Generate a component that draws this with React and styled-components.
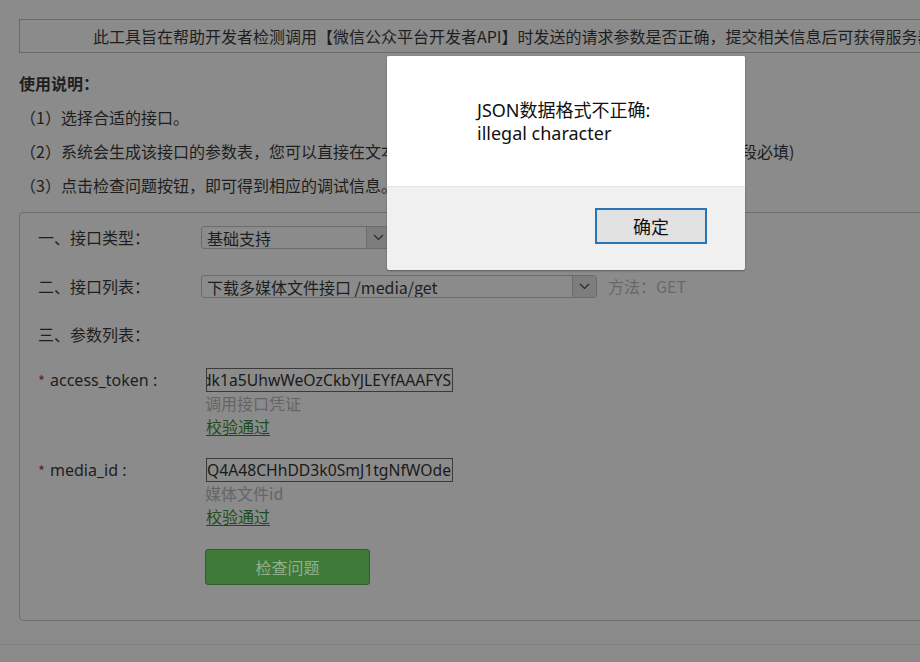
import React from "react";
import styled, { createGlobalStyle } from "styled-components";

const Global = createGlobalStyle`
  html, body { margin: 0; padding: 0; background: #8b8b8b; overflow: hidden; }
  body { font-family: "Noto Sans", "Noto Sans CJK SC", sans-serif; color: #1e1e1e; }
  #root { width: 920px; height: 662px; overflow: hidden; }
`;

const Page = styled.div`
  width: 1160px;
  height: 662px;
  padding: 19px 0 0 19px;
  box-sizing: border-box;
  position: relative;
`;

const Banner = styled.div`
  height: 34px;
  box-sizing: border-box;
  border: 1px solid #6a6a6a;
  display: flex;
  align-items: center;
  padding-left: 73px;
  font-size: 16px;
  white-space: nowrap;
  color: #1e1e1e;
  font-family: "Noto Sans CJK SC", sans-serif;
`;

const Intro = styled.div`
  margin-top: 13px;
  font-size: 16px;
  line-height: 34px;
  font-family: "Noto Sans CJK SC", sans-serif;
`;

const IntroTitle = styled.div`
  font-weight: bold;
`;

const IntroLine = styled.div`
  padding-left: 1px;
  white-space: nowrap;
`;

const Fieldset = styled.div`
  margin-top: 10px;
  border: 1px solid #6e6e6e;
  border-radius: 4px;
  padding: 13px 0 35px 18px;
  box-sizing: border-box;
  font-family: "Noto Sans CJK SC", sans-serif;
  font-size: 16px;
`;

const Row = styled.div`
  display: flex;
  align-items: ${(p) => (p.$top ? "flex-start" : "center")};
  min-height: 23px;
  margin-top: ${(p) => p.$gap || 0}px;
`;

const Label = styled.div`
  width: 163px;
  flex: none;
  line-height: 23px;
  white-space: nowrap;
  display: flex;
  align-items: center;
  height: ${(p) => (p.$h ? p.$h + "px" : "auto")};
`;

const ParamName = styled.span`
  font-family: "Noto Sans", "Noto Sans CJK SC", sans-serif;
  color: #1e1e1e;
`;

const Star = styled.span`
  color: #6e1a1a;
  margin-right: 5px;
  font-size: 15px;
`;

const Select = styled.div`
  width: ${(p) => p.$w}px;
  height: 23px;
  box-sizing: border-box;
  border: 1px solid #6c6c6c;
  border-radius: 3px;
  display: flex;
  align-items: stretch;
  font-size: 16px;
  line-height: 22px;
`;

const SelectText = styled.div`
  flex: 1;
  padding-left: 5px;
  white-space: nowrap;
  overflow: hidden;
  font-family: "Noto Sans CJK SC", sans-serif;
`;

const SelectArrow = styled.div`
  width: 23px;
  flex: none;
  background: #7d7d7d;
  border-left: 1px solid #6c6c6c;
  border-radius: 0 2px 2px 0;
  display: flex;
  align-items: center;
  justify-content: center;
`;

const Method = styled.span`
  margin-left: 11px;
  color: #686868;
  font-size: 16px;
  line-height: 23px;
`;

const ValueCol = styled.div`
  display: flex;
  flex-direction: column;
  margin-left: 5px;
`;

const Input = styled.div`
  width: 247px;
  height: 24px;
  box-sizing: border-box;
  border: 1px solid #3a3a3a;
  display: flex;
  justify-content: flex-end;
  align-items: center;
  overflow: hidden;
  white-space: nowrap;
  font-family: "Noto Sans", sans-serif;
  font-size: 15.7px;
  padding-right: 1px;
  color: #1a1a1a;
`;

const Hint = styled.div`
  line-height: 23px;
  color: #656565;
  margin-left: -1px;
`;

const Verify = styled.a`
  line-height: 23px;
  color: #1d4d1d;
  text-decoration: underline;
  text-underline-offset: 2px;
  align-self: flex-start;
`;

const CheckButton = styled.div`
  margin-left: 167px;
  width: 165px;
  height: 36px;
  box-sizing: border-box;
  background: #3f7a39;
  border: 1px solid #2f5e2b;
  border-radius: 3px;
  color: #93b08b;
  font-size: 16px;
  display: flex;
  align-items: center;
  justify-content: center;
`;

const BottomLine = styled.div`
  margin-top: 23px;
  margin-left: -19px;
  border-top: 1px solid #808080;
`;

const Dialog = styled.div`
  position: absolute;
  left: 387px;
  top: 56px;
  width: 358px;
  height: 214px;
  background: #f0f0f0;
  border-radius: 2px;
  box-shadow: 0 1px 2px rgba(0, 0, 0, 0.35);
  display: flex;
  flex-direction: column;
  overflow: hidden;
`;

const DialogBody = styled.div`
  height: 131px;
  background: #ffffff;
  border-bottom: 1px solid #e4e4e4;
  box-sizing: border-box;
  padding: 43px 0 0 90px;
  font-family: "Noto Sans", "Noto Sans CJK SC", sans-serif;
  font-size: 18px;
  line-height: 23px;
  color: #111;
`;

const DialogFooter = styled.div`
  flex: 1;
  display: flex;
  justify-content: flex-end;
  padding: 21px 38px 0 0;
  box-sizing: border-box;
  align-items: flex-start;
`;

const OkButton = styled.div`
  width: 112px;
  height: 36px;
  box-sizing: border-box;
  border: 2px solid #2a74b4;
  background: #e1e1e1;
  display: flex;
  align-items: center;
  justify-content: center;
  font-family: "Noto Sans CJK SC", sans-serif;
  font-size: 18px;
  line-height: 30px;
  color: #111;
`;

const Chevron = () => (
  <svg width="11" height="7" viewBox="0 0 11 7">
    <polyline points="1,1 5.5,5.5 10,1" fill="none" stroke="#2a2a2a" strokeWidth="1.2" />
  </svg>
);

export default function App() {
  return (
    <>
      <Global />
      <Page>
        <Banner>
          此工具旨在帮助开发者检测调用【微信公众平台开发者API】时发送的请求参数是否正确，提交相关信息后可获得服务器的验证结果
        </Banner>
        <Intro>
          <IntroTitle>使用说明：</IntroTitle>
          <IntroLine>（1）选择合适的接口。</IntroLine>
          <IntroLine>（2）系统会生成该接口的参数表，您可以直接在文本框内填入对应的参数值。（其中红色星号表示该字段必填)</IntroLine>
          <IntroLine>（3）点击检查问题按钮，即可得到相应的调试信息。</IntroLine>
        </Intro>
        <Fieldset>
          <Row>
            <Label>一、接口类型：</Label>
            <Select $w={190}>
              <SelectText>基础支持</SelectText>
              <SelectArrow>
                <Chevron />
              </SelectArrow>
            </Select>
          </Row>
          <Row $gap={26}>
            <Label>二、接口列表：</Label>
            <Select $w={396}>
              <SelectText>下载多媒体文件接口 /media/get</SelectText>
              <SelectArrow>
                <Chevron />
              </SelectArrow>
            </Select>
            <Method>方法：GET</Method>
          </Row>
          <Row $gap={25}>
            <Label>三、参数列表：</Label>
          </Row>
          <Row $gap={22} $top>
            <Label $h={24}>
              <Star>*</Star>
              <ParamName>access_token :</ParamName>
            </Label>
            <ValueCol>
              <Input>7KdZ8dk1a5UhwWeOzCkbYJLEYfAAAFYS</Input>
              <Hint>调用接口凭证</Hint>
              <Verify>校验通过</Verify>
            </ValueCol>
          </Row>
          <Row $gap={20} $top>
            <Label $h={24}>
              <Star>*</Star>
              <ParamName>media_id :</ParamName>
            </Label>
            <ValueCol>
              <Input>9sKQ4A48CHhDD3k0SmJ1tgNfWOde</Input>
              <Hint>媒体文件id</Hint>
              <Verify>校验通过</Verify>
            </ValueCol>
          </Row>
          <Row $gap={21}>
            <CheckButton>检查问题</CheckButton>
          </Row>
        </Fieldset>
        <BottomLine />
        <Dialog>
          <DialogBody>
            <div>JSON数据格式不正确:</div>
            <div>illegal character</div>
          </DialogBody>
          <DialogFooter>
            <OkButton>确定</OkButton>
          </DialogFooter>
        </Dialog>
      </Page>
    </>
  );
}
